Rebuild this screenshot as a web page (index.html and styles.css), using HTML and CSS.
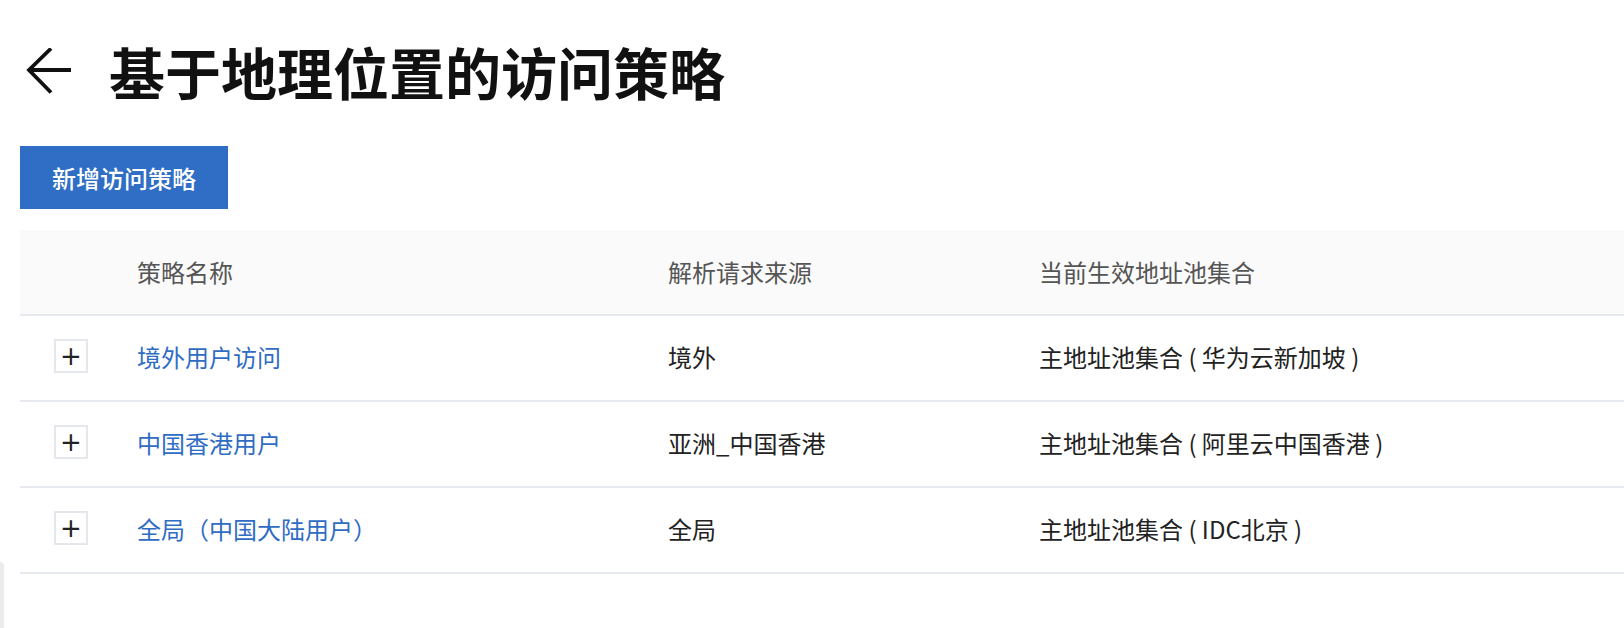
FILE: index.html
```html
<!DOCTYPE html>
<html lang="zh-CN">
<head>
<meta charset="utf-8">
<title>基于地理位置的访问策略</title>
<link rel="stylesheet" href="styles.css">
</head>
<body>
<div class="page">
  <header class="page-head">
    <a class="back" href="#" aria-label="返回">
      <svg width="50" height="48" viewBox="0 0 50 48" fill="none" stroke="#111" stroke-width="3.8" stroke-linecap="butt" stroke-linejoin="miter">
        <path d="M48 22H5"/>
        <path d="M28 0.5L6 22L28 44.5"/>
      </svg>
    </a>
    <h1 class="title">基于地理位置的访问策略</h1>
  </header>

  <div class="toolbar">
    <button class="btn-primary" type="button">新增访问策略</button>
  </div>

  <div class="table">
    <div class="row head">
      <div class="cell"></div>
      <div class="cell">策略名称</div>
      <div class="cell">解析请求来源</div>
      <div class="cell">当前生效地址池集合</div>
    </div>
    <div class="row">
      <div class="cell"><span class="expand">+</span></div>
      <div class="cell"><a class="link" href="#">境外用户访问</a></div>
      <div class="cell">境外</div>
      <div class="cell">主地址池集合 (&nbsp;华为云新加坡&nbsp;)</div>
    </div>
    <div class="row">
      <div class="cell"><span class="expand">+</span></div>
      <div class="cell"><a class="link" href="#">中国香港用户</a></div>
      <div class="cell">亚洲_中国香港</div>
      <div class="cell">主地址池集合 (&nbsp;阿里云中国香港&nbsp;)</div>
    </div>
    <div class="row">
      <div class="cell"><span class="expand">+</span></div>
      <div class="cell"><a class="link" href="#">全局（中国大陆用户）</a></div>
      <div class="cell">全局</div>
      <div class="cell">主地址池集合 (&nbsp;IDC北京&nbsp;)</div>
    </div>
  </div>
</div>
<div class="side-tab"></div>
</body>
</html>
```

FILE: styles.css
```css
html, body {
  margin: 0;
  padding: 0;
  background: #fff;
}

body {
  font-family: "Noto Sans CJK SC", "Noto Sans", "Liberation Sans", sans-serif;
  color: #222;
  height: 628px;
  overflow: hidden;
  position: relative;
}

.page {
  padding: 0 0 0 20px;
}

/* heading with back arrow */
.page-head {
  display: flex;
  align-items: center;
  height: 146px;
  box-sizing: border-box;
  margin-top: -2px;
}

.back {
  display: flex;
  width: 86px;
  padding-left: 3px;
  margin-top: 2px;
}

.title {
  margin: 0;
  font-size: 56px;
  font-weight: 700;
  color: #111;
  line-height: 1;
}

.toolbar {
  display: flex;
  height: 84px;
  align-items: flex-start;
  margin-top: 2px;
}

.btn-primary {
  width: 208px;
  height: 63px;
  border: 0;
  background: #306ec6;
  color: #fff;
  font-family: inherit;
  font-size: 24px;
  font-weight: 500;
  padding: 0;
  cursor: pointer;
}

/* policy table */
.table {
  display: flex;
  flex-direction: column;
}

.row {
  display: grid;
  grid-template-columns: 117px 531px 371px 1fr;
  height: 86px;
  box-sizing: border-box;
  padding-bottom: 4px;
  border-bottom: 2px solid #e6eaef;
  align-items: center;
  font-size: 24px;
  color: #222;
}

.row.head {
  background: #fafafa;
  color: #555;
  padding-bottom: 2px;
}

.cell {
  display: flex;
  align-items: center;
  white-space: pre;
}

.expand {
  margin-left: 34px;
  width: 34px;
  height: 34px;
  box-sizing: border-box;
  border: 2px solid #e4e8ed;
  display: flex;
  align-items: center;
  justify-content: center;
  font-size: 26px;
  font-weight: 500;
  color: #222;
  font-family: "DejaVu Sans", sans-serif;
  line-height: 1;
}

.link {
  color: #2f6cc4;
  text-decoration: none;
}

/* edge of a collapsed side panel */
.side-tab {
  position: absolute;
  left: 0;
  top: 562px;
  width: 4px;
  bottom: 0;
  background: #ececec;
  border-top-right-radius: 6px;
}
```
